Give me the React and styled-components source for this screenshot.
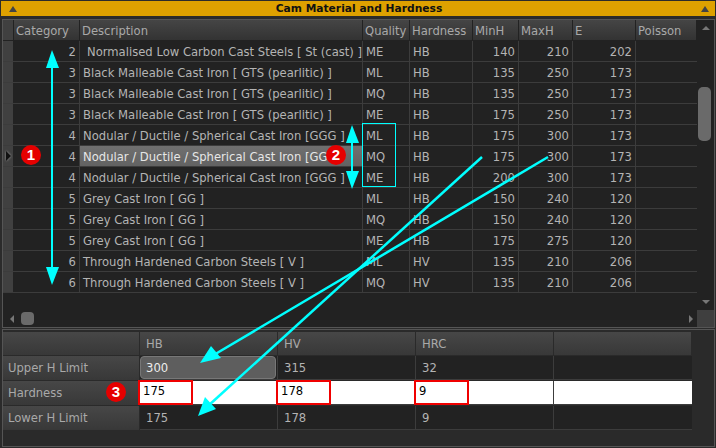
import React from "react";
import styled, { createGlobalStyle } from "styled-components";

const Global = createGlobalStyle`
  html, body { margin: 0; padding: 0; background: #2b2b2b; }
  * { box-sizing: border-box; }
`;
const Page = styled.div`
  position: relative; width: 716px; height: 448px; overflow: hidden;
  background: #2b2b2b; font-family: "DejaVu Sans", sans-serif; font-size: 11.6px; color: #b4b4b4;
  display: flex; flex-direction: column; padding: 1px 1px 1px 2px;
`;
const TitleBar = styled.div`
  height: 15px; margin-left: -1px; flex: none; background: #dea100; color: #111; font-family: "DejaVu Sans", sans-serif;
  font-weight: 700; font-size: 10.7px; display: flex; align-items: center; justify-content: space-between; padding: 0 6px 0 8px;
`;
const Tri = styled.span`
  width: 0; height: 0; border-left: 4px solid transparent; border-right: 4px solid transparent; border-bottom: 6px solid #444;
`;
const UpperPanel = styled.div`
  margin-top: 3px; height: 309px; flex: none; border: 1px solid #555; border-bottom-width: 1px; background: #222;
  display: grid; grid-template-columns: 694px 1fr; grid-template-rows: 1fr 17px;
`;
const TableArea = styled.div` overflow: hidden; `;
const GridRow = styled.div`
  display: grid; height: 21px;
  grid-template-columns: 11px 66px 283px 47px 63px 46px 54px 63px 61px;
`;
const HeadRowWrap = styled(GridRow)` background: #222; `;
const HeadCell = styled.div`
  height: 20px; margin-right: 1px; background: linear-gradient(#454545, #333);
  color: #a9a9a9; padding-left: 2px; line-height: 22px; overflow: hidden; white-space: nowrap;
`;
const RowHead = styled.div`
  height: 20px; margin-right: 1px; background: #404040; display: flex; align-items: center; padding-left: 3px;
`;
const Marker = styled.span`
  width: 0; height: 0; border-top: 5px solid transparent; border-bottom: 5px solid transparent; border-left: 5px solid #111;
  filter: drop-shadow(0 0 1px #aaa);
`;
const DataRow = styled(GridRow)` border-bottom: 1px solid #3c3c3c; `;
const Cell = styled.div`
  height: 20px; line-height: 22px; white-space: nowrap; overflow: hidden; padding: 0 3px;
  text-align: ${p => (p.$num ? "right" : "left")};
  border-right: ${p => (p.$last ? "none" : "1px solid #3c3c3c")};
  background: ${p => (p.$sel ? "linear-gradient(#707070, #626262)" : "transparent")};
  color: ${p => (p.$sel ? "#e6e6e6" : "#b4b4b4")};
  ${p => p.$indent && "padding-left: 7px;"}
`;
const VScroll = styled.div` position: relative; display: flex; flex-direction: column; align-items: center; justify-content: space-between; padding: 6px 0 6px; `;
const Thumb = styled.div` position: absolute; top: 67px; left: 1px; width: 13px; height: 54px; border-radius: 5px; background: #6a6a6a; `;
const ArrowUp = styled.span` width: 0; height: 0; border-left: 4px solid transparent; border-right: 4px solid transparent; border-bottom: 4px solid #777; `;
const ArrowDown = styled(ArrowUp)` border-bottom: none; border-top: 4px solid #777; `;
const HScroll = styled.div` display: flex; align-items: center; padding-left: 7px; padding-right: 4px; justify-content: flex-start; gap: 7px; `;
const ArrowLeft = styled.span` width: 0; height: 0; border-top: 4px solid transparent; border-bottom: 4px solid transparent; border-right: 4px solid #777; `;
const ArrowRight = styled(ArrowLeft)` border-right: none; border-left: 4px solid #777; margin-left: auto; `;
const HThumb = styled.div` width: 13px; height: 13px; border-radius: 4px; background: #6a6a6a; `;
const Corner = styled.div` background: #3f3f3f; `;
const LowerPanel = styled.div`
  margin-top: 1px; flex: 1; border: 1px solid #555; background: #2a2a2a; padding: 2px 0 0 0;
`;
const LowerRow = styled.div`
  display: grid; grid-template-columns: 137px 138px 138px 138px 138px; width: 689px; height: ${p => p.$h}px;
`;
const LowerHead = styled.div`
  margin-right: 1px; height: 23px; background: linear-gradient(#474747, #383838); color: #a9a9a9; padding-left: 6px; line-height: 24px;
`;
const RowLabel = styled.div`
  margin-right: 1px; background: linear-gradient(#474747, #383838); padding-left: 5px; line-height: 24px; height: 24px; color: #a9a9a9;
`;
const ValueCell = styled.div`
  position: relative; height: 24px; line-height: 25px; padding-left: 6px; border-right: 1px solid #3c3c3c; border-bottom: 1px solid #3c3c3c;
  background: ${p => (p.$white ? "#fff" : "#222")};
  color: ${p => (p.$white ? "#000" : "#b4b4b4")};
  ${p => p.$last && "border-right: none;"}
`;
const EditBox = styled.div`
  position: absolute; left: 0; top: 0; width: 136px; height: 23px; border: 1px solid #777; border-radius: 4px; background: #5e5e5e;
  color: #eee; padding-left: 5px; line-height: 23px;
`;
const RedBox = styled.div`
  position: absolute; left: -2px; top: -1px; width: 55px; height: 25px; border: 2px solid #f00000; padding-left: 3px; line-height: 19px; color: #000;
`;
const Overlay = styled.svg` position: absolute; left: 0; top: 0; pointer-events: none; `;
const Badge = styled.div`
  position: absolute; left: ${p => p.$x - 10}px; top: ${p => p.$y - 10}px; width: 20px; height: 20px; border-radius: 50%;
  background: #e60000; color: #fff; font: 700 15px/20px "Liberation Sans", sans-serif; text-align: center;
`;

const heads = ["Category", "Description", "Quality", "Hardness", "MinH", "MaxH", "E", "Poisson"];
const B = "Black Malleable Cast Iron [ GTS (pearlitic) ]";
const N = "Nodular / Ductile / Spherical Cast Iron [GGG ]";
const G = "Grey Cast Iron [ GG ]";
const T = "Through Hardened Carbon Steels [ V ]";
const rows = [
  [2, "Normalised Low Carbon Cast Steels [ St (cast) ]", "ME", "HB", 140, 210, 202],
  [3, B, "ML", "HB", 135, 250, 173],
  [3, B, "MQ", "HB", 135, 250, 173],
  [3, B, "ME", "HB", 175, 250, 173],
  [4, N, "ML", "HB", 175, 300, 173],
  [4, N, "MQ", "HB", 175, 300, 173],
  [4, N, "ME", "HB", 200, 300, 173],
  [5, G, "ML", "HB", 150, 240, 120],
  [5, G, "MQ", "HB", 150, 240, 120],
  [5, G, "ME", "HB", 175, 275, 120],
  [6, T, "ML", "HV", 135, 210, 206],
  [6, T, "MQ", "HV", 135, 210, 206],
];

export default function App() {
  return (
    <Page>
      <Global />
      <TitleBar><Tri /><span>Cam Material and Hardness</span><Tri /></TitleBar>
      <UpperPanel>
        <TableArea>
          <HeadRowWrap>
            <RowHead />
            {heads.map(h => <HeadCell key={h}>{h}</HeadCell>)}
          </HeadRowWrap>
          {rows.map((r, i) => (
            <DataRow key={i}>
              <RowHead>{i === 5 && <Marker />}</RowHead>
              <Cell $num>{r[0]}</Cell>
              <Cell $sel={i === 5} $indent={i === 0}>{i === 5 ? "Nodular / Ductile / Spherical Cast Iron [GG" : r[1]}</Cell>
              <Cell>{r[2]}</Cell>
              <Cell>{r[3]}</Cell>
              <Cell $num>{r[4]}</Cell>
              <Cell $num>{r[5]}</Cell>
              <Cell $num>{r[6]}</Cell>
              <Cell $last />
            </DataRow>
          ))}
        </TableArea>
        <VScroll><ArrowUp /><Thumb /><ArrowDown /></VScroll>
        <HScroll><ArrowLeft /><HThumb /><ArrowRight /></HScroll>
        <Corner />
      </UpperPanel>
      <LowerPanel>
        <LowerRow $h={24}>
          <LowerHead />
          <LowerHead>HB</LowerHead>
          <LowerHead>HV</LowerHead>
          <LowerHead>HRC</LowerHead>
          <LowerHead />
        </LowerRow>
        <LowerRow $h={25}>
          <RowLabel>Upper H Limit</RowLabel>
          <ValueCell><EditBox>300</EditBox></ValueCell>
          <ValueCell>315</ValueCell>
          <ValueCell>32</ValueCell>
          <ValueCell $last />
        </LowerRow>
        <LowerRow $h={25}>
          <RowLabel>Hardness</RowLabel>
          <ValueCell $white><RedBox>175</RedBox></ValueCell>
          <ValueCell $white><RedBox>178</RedBox></ValueCell>
          <ValueCell $white><RedBox>9</RedBox></ValueCell>
          <ValueCell $white $last />
        </LowerRow>
        <LowerRow $h={25}>
          <RowLabel>Lower H Limit</RowLabel>
          <ValueCell>175</ValueCell>
          <ValueCell>178</ValueCell>
          <ValueCell>9</ValueCell>
          <ValueCell $last />
        </LowerRow>
      </LowerPanel>
      <Overlay width="716" height="448" viewBox="0 0 716 448">
        <g stroke="#00ffff" strokeWidth="2" fill="#00ffff">
          <line x1="52" y1="60" x2="52" y2="275" />
          <polygon points="52,50 46,68 59,68" stroke="none" />
          <polygon points="52,285 46,267 59,267" stroke="none" />
          <line x1="352" y1="135" x2="352" y2="180" />
          <polygon points="352,125 346,143 359,143" stroke="none" />
          <polygon points="352,189 346,171 359,171" stroke="none" />
          <rect x="362.5" y="123.5" width="33" height="63" fill="none" strokeWidth="1" />
          <line x1="548" y1="157" x2="212" y2="356" strokeWidth="2.5" />
          <polygon points="200,363 211,346 221,358" stroke="none" />
          <line x1="482" y1="157" x2="208" y2="406" strokeWidth="2.5" />
          <polygon points="198,416 205,397 216,409" stroke="none" />
        </g>
      </Overlay>
      <Badge $x={31} $y={155}>1</Badge>
      <Badge $x={336} $y={155}>2</Badge>
      <Badge $x={116} $y={392}>3</Badge>
    </Page>
  );
}
